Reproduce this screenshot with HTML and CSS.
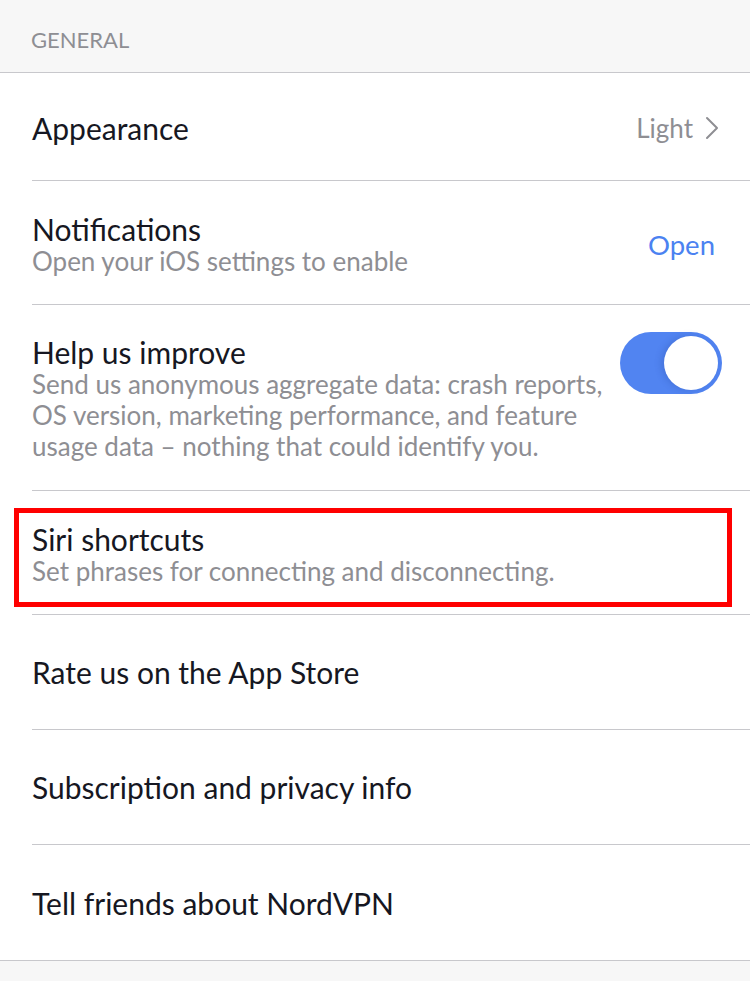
FILE: index.html
```html
<!DOCTYPE html>
<html lang="en">

<head>
  <link rel="stylesheet" href="styles.css">
</head>

<body>
  <div class="section-header">GENERAL</div>

  <div class="list">
    <div class="row row-appearance">
      <div class="row-text">
        <div class="row-title">Appearance</div>
      </div>
      <div class="row-value">
        Light
        <svg class="chevron" width="14" height="24" viewBox="0 0 14 24">
          <path d="M2 2 L12 12 L2 22" fill="none" stroke="#8e8e93" stroke-width="2" stroke-linecap="round" stroke-linejoin="round" />
        </svg>
      </div>
    </div>

    <div class="row row-notifications">
      <div class="row-text">
        <div class="row-title">Notifications</div>
        <div class="row-sub">Open your iOS settings to enable</div>
      </div>
      <a class="row-link" href="#">Open</a>
    </div>

    <div class="row row-help">
      <div class="row-text">
        <div class="row-title">Help us improve</div>
        <div class="row-sub">Send us anonymous aggregate data: crash reports, OS version, marketing performance, and feature usage data – nothing that could identify you.</div>
      </div>
      <div class="toggle">
        <div class="knob"></div>
      </div>
    </div>

    <div class="row row-siri">
      <div class="highlight"></div>
      <div class="row-text">
        <div class="row-title">Siri shortcuts</div>
        <div class="row-sub">Set phrases for connecting and disconnecting.</div>
      </div>
    </div>

    <div class="row row-plain">
      <div class="row-title">Rate us on the App Store</div>
    </div>

    <div class="row row-plain">
      <div class="row-title">Subscription and privacy info</div>
    </div>

    <div class="row row-plain row-last">
      <div class="row-title">Tell friends about NordVPN</div>
    </div>
  </div>

  <div class="footer"></div>
</body>

</html>
```

FILE: styles.css
```css
body {
  font-family: Lato, 'Open Sans', sans-serif;
  background-color: #f7f7f7;
  margin: 0;
  color: #161722;
}

.section-header {
  height: 73px;
  padding-left: 31px;
  display: flex;
  align-items: center;
  font-size: 22px;
  color: #8e8e93;
  border-bottom: 1px solid #c8c8cc;
  box-sizing: border-box;
  padding-top: 6px;
}

.list {
  background-color: #fff;
  padding-left: 32px;
  border-bottom: 1px solid #c8c8cc;
}

.row {
  position: relative;
  display: flex;
  align-items: center;
  justify-content: space-between;
  border-bottom: 1px solid #c8c8cc;
  box-sizing: border-box;
  padding-right: 28px;
}

.row-last {
  border-bottom: none;
}

.row-title {
  font-size: 30px;
  line-height: 34px;
}

.row-sub {
  font-size: 26px;
  line-height: 31px;
  color: #8e8e93;
}

.row-appearance {
  height: 108px;
  padding-top: 2px;
  padding-right: 31px;
}

.row-value {
  display: flex;
  align-items: center;
  gap: 12px;
  font-size: 26px;
  color: #8e8e93;
}

.row-notifications {
  height: 124px;
  padding-top: 4px;
  padding-right: 35px;
}

.row-link {
  font-size: 27.5px;
  color: #4b82f1;
  text-decoration: none;
}

.row-help {
  height: 186px;
  align-items: flex-start;
  padding-top: 30px;
}

.row-help .row-text {
  max-width: 580px;
}

.toggle {
  width: 102px;
  height: 62px;
  margin-top: -3px;
  border-radius: 31px;
  background-color: #5184f1;
  position: relative;
  flex-shrink: 0;
}

.knob {
  position: absolute;
  right: 4px;
  top: 4px;
  width: 54px;
  height: 54px;
  border-radius: 50%;
  background-color: #fff;
  box-shadow: -3px 0 6px rgba(40, 70, 160, 0.25);
}

.row-siri {
  height: 124px;
  padding-top: 3px;
}

.highlight {
  position: absolute;
  left: -18px;
  top: 17px;
  width: 718px;
  height: 99px;
  border: 5px solid #ff0000;
  box-sizing: border-box;
}

.row-plain {
  height: 115px;
}

.footer {
  height: 21px;
}
```
